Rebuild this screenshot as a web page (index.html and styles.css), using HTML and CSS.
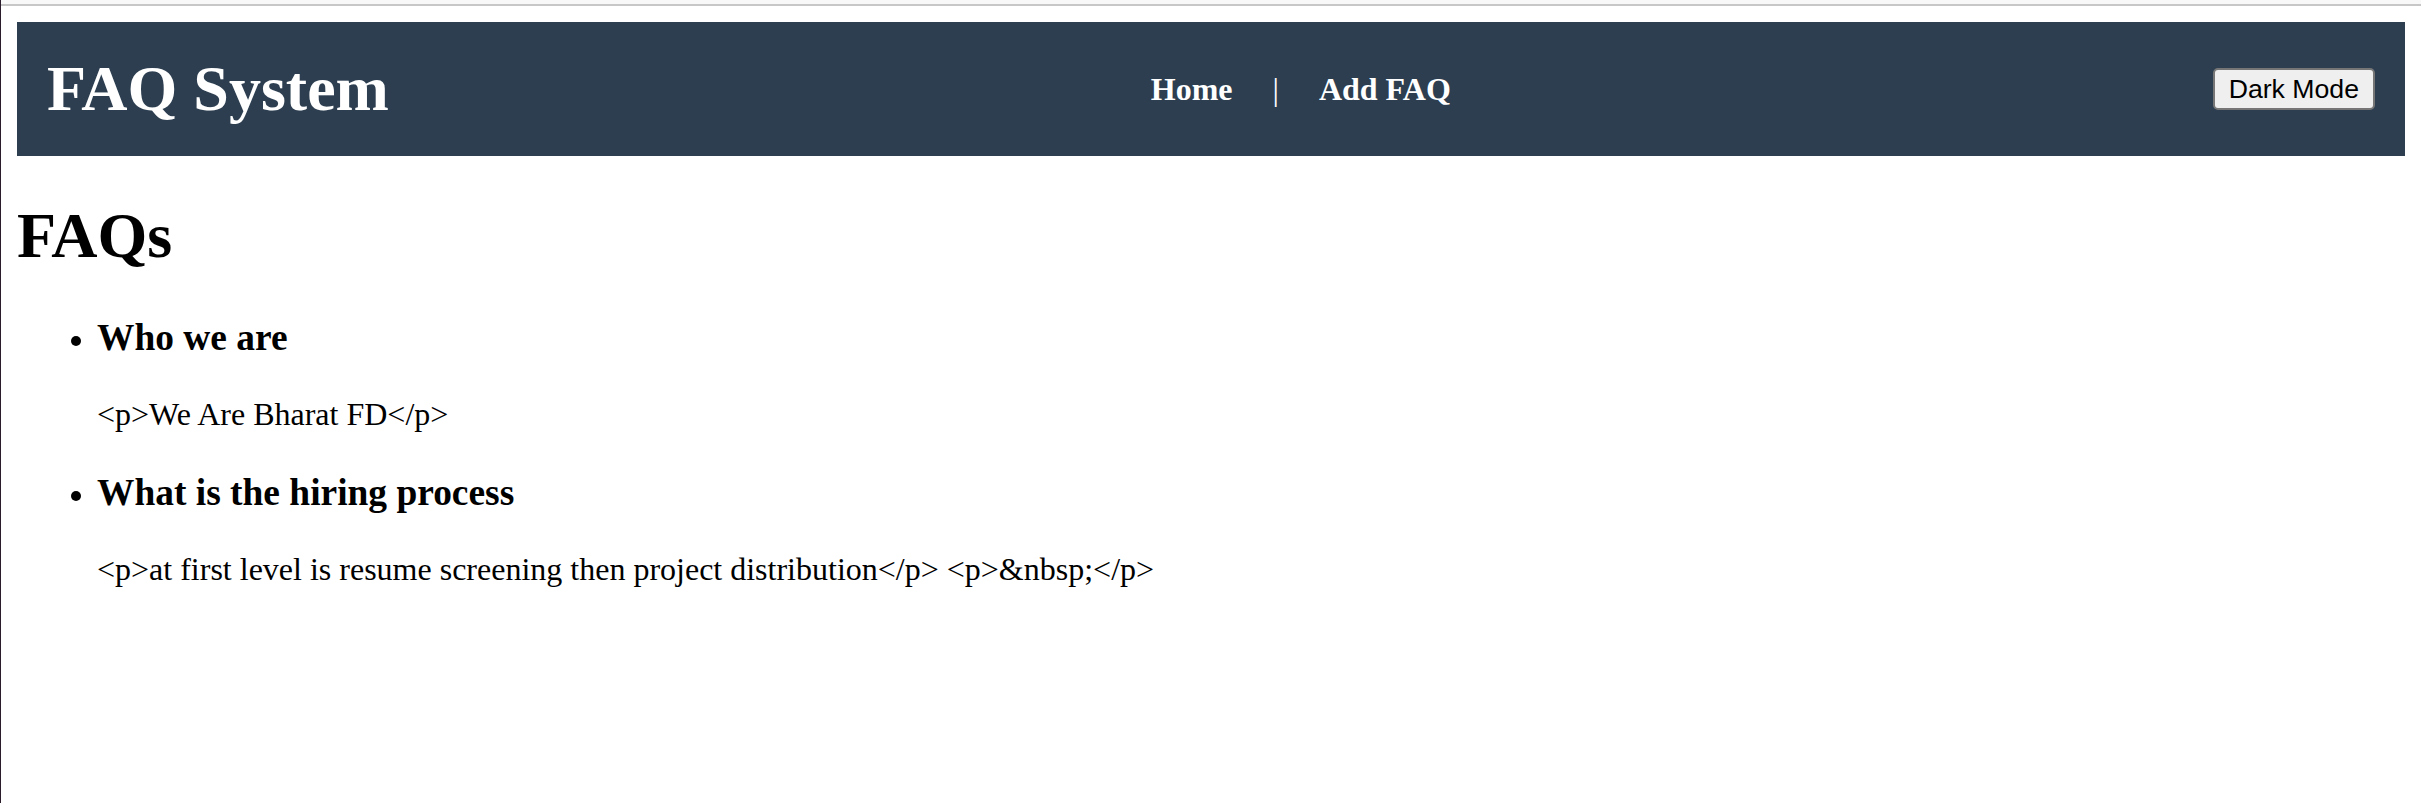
FILE: index.html
```html
<!DOCTYPE html>
<html lang="en">
<head>
<meta charset="utf-8">
<title>FAQ System</title>
<link rel="stylesheet" href="styles.css">
</head>
<body>
<div class="chrome"></div>
<div class="page">
  <header class="site-header">
    <h1 class="brand">FAQ System</h1>
    <nav class="nav">
      <a href="#" class="nav-link">Home</a>
      <span class="nav-sep">|</span>
      <a href="#" class="nav-link">Add FAQ</a>
    </nav>
    <button class="mode-btn">Dark Mode</button>
  </header>
  <h1 class="page-title">FAQs</h1>
  <ul class="faq-list">
    <li class="faq-item">
      <h3 class="faq-q">Who we are</h3>
      <p class="faq-a">&lt;p&gt;We Are Bharat FD&lt;/p&gt;</p>
    </li>
    <li class="faq-item">
      <h3 class="faq-q">What is the hiring process</h3>
      <p class="faq-a">&lt;p&gt;at first level is resume screening then project distribution&lt;/p&gt; &lt;p&gt;&amp;nbsp;&lt;/p&gt;</p>
    </li>
  </ul>
</div>
</body>
</html>
```

FILE: styles.css
```css
html, body {
  margin: 0;
  padding: 0;
  background: #ffffff;
}

body {
  min-height: 100vh;
  box-sizing: border-box;
  border-left: 1px solid #2b1c2b;
  font-family: "Liberation Serif", "Times New Roman", serif;
  font-size: 32px;
  color: #000000;
}

.chrome {
  height: 4px;
  background: #f8f8f8;
  border-bottom: 2px solid #c7c7c7;
}

.page {
  padding: 16px;
}

.site-header {
  display: flex;
  justify-content: space-between;
  align-items: center;
  background: #2c3e50;
  color: #ffffff;
  padding: 30px;
}

.brand {
  margin: 0;
  font-size: 64px;
  font-weight: bold;
  line-height: normal;
}

.nav {
  display: flex;
  align-items: center;
  font-size: 32px;
  font-weight: bold;
}

.nav-link {
  color: #ffffff;
  text-decoration: none;
  margin: 0 20px;
}

.nav-sep {
  color: #ffffff;
  font-weight: normal;
  margin: 0 20px;
}

.mode-btn {
  box-sizing: border-box;
  height: 42px;
  font-family: "Liberation Sans", Arial, sans-serif;
  font-size: 26.67px;
  line-height: 30px;
  padding: 0 14px;
  background: #efefef;
  color: #000000;
  border: 2px solid #767676;
  border-radius: 5px;
}

.page-title {
  font-size: 64px;
  font-weight: bold;
  margin: 42.88px 0;
  line-height: normal;
}

.faq-list {
  margin: 32px 0;
  padding-left: 80px;
  list-style: disc;
}

.faq-q {
  font-size: 37.44px;
  font-weight: bold;
  margin: 37.44px 0;
  line-height: normal;
}

.faq-a {
  margin: 32px 0;
  font-size: 32px;
  line-height: normal;
}
```
